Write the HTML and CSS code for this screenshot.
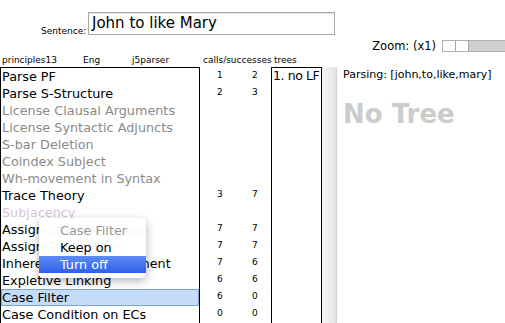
FILE: index.html
```html
<!DOCTYPE html>
<html lang="en">
<head>
    <meta charset="UTF-8">
    <title>Parser - Principles</title>
    <link rel="stylesheet" href="styles.css">
</head>
<body>
    <div class="sentence-row">
        <label class="sentence-label">Sentence:</label>
        <div class="sentence-input">John to like Mary</div>
    </div>

    <div class="header-row">
        <span class="h-principles">principles13</span>
        <span class="h-lang">Eng</span>
        <span class="h-parser">j5parser</span>
        <span class="h-calls">calls/successes</span>
        <span class="h-trees">trees</span>
        <div class="zoom">
            <span class="zoom-label">Zoom: (x1)</span>
            <div class="slider">
                <span class="cell"></span>
                <span class="cell"></span>
            </div>
        </div>
    </div>

    <div class="main">
        <div class="principles">
            <div class="row on">Parse PF</div>
            <div class="row on">Parse S-Structure</div>
            <div class="row off">License Clausal Arguments</div>
            <div class="row off">License Syntactic Adjuncts</div>
            <div class="row off">S-bar Deletion</div>
            <div class="row off">Coindex Subject</div>
            <div class="row off">Wh-movement in Syntax</div>
            <div class="row on">Trace Theory</div>
            <div class="row dim">Subjacency</div>
            <div class="row on">Assign Structural Case</div>
            <div class="row on">Assign Theta Roles</div>
            <div class="row on">Inherent Case Assignment</div>
            <div class="row on">Expletive Linking</div>
            <div class="row on selected">Case Filter</div>
            <div class="row on">Case Condition on ECs</div>

            <div class="menu">
                <div class="menu-title">Case Filter</div>
                <div class="menu-item">Keep on</div>
                <div class="menu-item active">Turn off</div>
            </div>
        </div>

        <div class="counts">
            <div class="count"><span>1</span><span>2</span></div>
            <div class="count"><span>2</span><span>3</span></div>
            <div class="count"></div>
            <div class="count"></div>
            <div class="count"></div>
            <div class="count"></div>
            <div class="count"></div>
            <div class="count"><span>3</span><span>7</span></div>
            <div class="count"></div>
            <div class="count"><span>7</span><span>7</span></div>
            <div class="count"><span>7</span><span>7</span></div>
            <div class="count"><span>7</span><span>6</span></div>
            <div class="count"><span>6</span><span>6</span></div>
            <div class="count"><span>6</span><span>0</span></div>
            <div class="count"><span>0</span><span>0</span></div>
        </div>

        <div class="trees">
            <div class="tree-item">1. no LF</div>
        </div>

        <div class="gutter"></div>

        <div class="tree-view">
            <div class="parsing">Parsing: [john,to,like,mary]</div>
            <div class="no-tree">No Tree</div>
        </div>
    </div>
</body>
</html>
```

FILE: styles.css
```css
body {
    margin: 0;
    width: 505px;
    height: 323px;
    overflow: hidden;
    background: white;
    font-family: "DejaVu Sans", sans-serif;
    color: #000;
}
.sentence-row {
    display: flex;
    align-items: flex-start;
    padding: 12px 0 0 41px;
    height: 23px;
}
.sentence-label {
    font-size: 9px;
    line-height: 12px;
    margin-top: 13px;
    width: 47px;
}
.sentence-input {
    box-sizing: border-box;
    width: 247px;
    height: 23px;
    border: 1px solid #a8a8a8;
    box-shadow: inset 0 1px 1px rgba(0,0,0,0.12);
    font-size: 15px;
    line-height: 21px;
    padding-left: 3px;
}
.header-row {
    display: flex;
    align-items: flex-end;
    height: 31px;
    padding-bottom: 1px;
    font-size: 9px;
    line-height: 12px;
}
.h-principles { margin-left: 2px; width: 81px; }
.h-lang { width: 49px; }
.h-parser { width: 71px; }
.h-calls { width: 71px; }
.h-trees { width: 40px; }
.zoom {
    margin-left: auto;
    align-self: flex-start;
    display: flex;
    align-items: center;
    margin-top: 5px;
}
.zoom-label {
    font-size: 11.5px;
    margin-right: 6px;
}
.slider {
    display: flex;
    width: 63px;
    height: 12px;
    background: #cfcfcf;
    border: 1px solid #b0b0b0;
    border-right: none;
    box-sizing: border-box;
}
.slider .cell {
    width: 12px;
    background: #fff;
    border-right: 1px solid #a8a8a8;
}
.main {
    display: flex;
    height: 256px;
}
.principles {
    position: relative;
    box-sizing: border-box;
    width: 200px;
    border: 1px solid #000;
    border-bottom: none;
}
.row {
    height: 17px;
    line-height: 17px;
    font-size: 12.8px;
    padding-left: 1px;
    white-space: nowrap;
    overflow: hidden;
}
.row.off { color: #8a8a8a; }
.row.dim { color: #dcbfdc; }
.row.selected {
    background: #c5dcf8;
    outline: 1px solid #7fa3cf;
    outline-offset: -1px;
}
.menu {
    position: absolute;
    left: 38px;
    top: 150px;
    width: 107px;
    padding: 4px 0 5px;
    background: rgba(255,255,255,0.97);
    border-radius: 5px;
    box-shadow: 0 3px 10px rgba(0,0,0,0.3);
}
.menu-title, .menu-item {
    height: 17px;
    line-height: 17px;
    font-size: 12.8px;
    padding-left: 21px;
}
.menu-title { color: #999; }
.menu-item.active {
    background: linear-gradient(#5d8cf5, #2f5fe8);
    color: white;
}
.counts {
    width: 71px;
    font-size: 9px;
}
.count {
    display: flex;
    height: 17px;
    line-height: 17px;
}
.count span:first-child { margin-left: 17px; width: 35px; }
.trees {
    box-sizing: border-box;
    width: 51px;
    border: 1px solid #000;
    border-bottom: none;
    overflow: hidden;
}
.tree-item {
    font-size: 12.5px;
    line-height: 16px;
    padding-left: 1px;
    white-space: nowrap;
    letter-spacing: -0.4px;
}
.gutter {
    width: 15px;
    background: linear-gradient(to right, #f4f4f4, #e6e6e6 85%, #d0d0d0);
}
.tree-view {
    flex: 1;
    padding: 0 0 0 6px;
}
.parsing {
    font-size: 11px;
    line-height: 16px;
}
.no-tree {
    margin-top: 16px;
    font-size: 26px;
    font-weight: bold;
    color: #cccccc;
}
```
